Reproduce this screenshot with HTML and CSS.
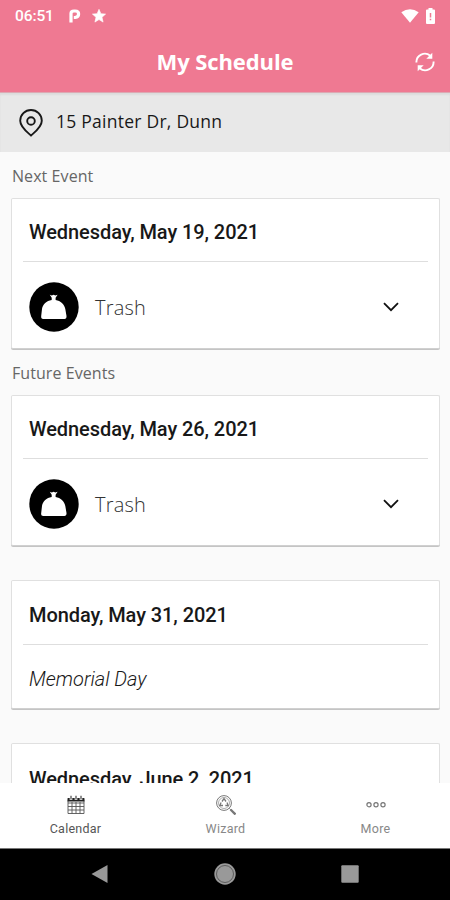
FILE: index.html
```html
<!DOCTYPE html>
<html lang="en">
<head>
<meta charset="utf-8">
<title>My Schedule</title>
<link rel="stylesheet" href="styles.css">
</head>
<body>
<svg class="defs" width="0" height="0">
  <symbol id="bag" viewBox="0 0 50 50">
    <circle cx="25" cy="25" r="24.700" fill="#000"/>
    <path d="M20.800 12.800l2 .8 1.800-.9 1.800.9 2.200-.8-2 3v2.300c5 .8 8.800 4.300 9.700 8.900l1.200 7c.2 1.800-.7 3-2 3H14.200c-1.500 0-2.300-1.200-2-3l.8-7c.8-4.600 4.500-8.100 9.700-8.900v-2.300z" fill="#fff"/>
  </symbol>
  <symbol id="chevron" viewBox="0 0 16 10">
    <path d="M1 1.200l7 7 7-7" fill="none" stroke="#111" stroke-width="1.800"/>
  </symbol>
</svg>
<div class="screen">
  <header class="top">
    <div class="status">
      <span class="clock">06:51</span>
      <svg class="pandora" width="12" height="14" viewBox="0 0 12 14"><path d="M2 13.500V4.500Q2 2 5 2H6.200Q9.600 2 9.600 5T6.200 8.500H4.800" fill="none" stroke="#fff" stroke-width="3.200"/></svg>
      <svg class="star" width="14" height="14" viewBox="0 0 14 14"><path d="M7 .3l1.900 4.400 4.700.4L10 8.300l1.100 4.800L7 10.600l-4.100 2.500L4 8.300.400 5.100l4.700-.4z" fill="#fff" stroke="#fff" stroke-width=".6"/></svg>
      <span class="grow"></span>
      <svg class="wifi" width="18" height="14" viewBox="0 0 18 14"><path d="M.3 3.300Q9-3 17.700 3.300L9 13.700z" fill="#fff"/></svg>
      <svg class="battery" width="9" height="16" viewBox="0 0 9 16"><path d="M0 2.500Q0 1.500 1 1.500H2.500V0h4v1.500H8q1 0 1 1V15q0 1-1 1H1q-1 0-1-1z" fill="#fff"/><path d="M4.500 5v4.600M4.500 10.700v1.600" stroke="#ef7992" stroke-width="1.500"/></svg>
    </div>
    <div class="titlebar">
      <h1>My Schedule</h1>
      <svg class="refresh" width="20" height="20" viewBox="0 0 20 20"><g fill="none" stroke="#fff" stroke-width="1.900"><path d="M1.400 10.500A8.400 8.400 0 0 1 15.300 3.800"/><path d="M18.600 9.500A8.400 8.400 0 0 1 4.700 16.200"/></g><path d="M17.300.7V6.700H11.300zM2.700 19.300V13.300H8.700z" fill="#fff"/></svg>
    </div>
  </header>
  <div class="location">
    <svg width="24" height="28" viewBox="0 0 24 28"><path d="M12 26.500C8.500 23.300 1.200 18.300 1.200 11.800a10.800 10.800 0 0 1 21.600 0C22.800 18.300 15.500 23.300 12 26.500z" fill="none" stroke="#181818" stroke-width="1.900"/><circle cx="12" cy="12" r="3.800" fill="none" stroke="#181818" stroke-width="1.900"/></svg>
    <span class="address">15 Painter Dr, Dunn</span>
  </div>
  <main class="list">
    <h2>Next Event</h2>
    <section class="card">
      <h3>Wednesday, May 19, 2021</h3>
      <div class="event"><svg width="50" height="50"><use href="#bag"/></svg><span class="kind">Trash</span><svg class="chev" width="16" height="10"><use href="#chevron"/></svg></div>
    </section>
    <h2>Future Events</h2>
    <section class="card">
      <h3>Wednesday, May 26, 2021</h3>
      <div class="event"><svg width="50" height="50"><use href="#bag"/></svg><span class="kind">Trash</span><svg class="chev" width="16" height="10"><use href="#chevron"/></svg></div>
    </section>
    <section class="card spaced">
      <h3>Monday, May 31, 2021</h3>
      <p class="holiday">Memorial Day</p>
    </section>
    <section class="card spaced">
      <h3 class="low">Wednesday, June 2, 2021</h3>
      <div class="event"></div>
    </section>
  </main>
  <nav class="tabs">
    <div class="tab active">
      <svg width="18" height="20" viewBox="0 0 18 20"><path d="M1 4.500h16v14H1zM1 8h16M1 11.500h16M1 15h16M5 7v11.500M9 7v11.500M13 7v11.500" fill="none" stroke="#555" stroke-width=".9"/><path d="M.6 3h16.800v3.500H.6z" fill="#222"/><path d="M4 1v4M9 1v4M14 1v4" stroke="#fff" stroke-width="2.600"/><path d="M4 .8v3.700M9 .8v3.700M14 .8v3.700" stroke="#444" stroke-width="1.200"/></svg>
      <span>Calendar</span>
    </div>
    <div class="tab">
      <svg width="20" height="20" viewBox="0 0 20 20"><g fill="none" stroke="#777"><circle cx="8" cy="8" r="7.400" stroke-width="1"/><circle cx="8" cy="8" r="5.500" stroke-width=".6"/><path d="M6 6.500l2-2.800 2 2.800M11 7.500l1.200 3H9.300M7 10.500H3.800l1.300-3" stroke-width="1.300"/><path d="M13.300 13.300l1.500 1.500" stroke-width="1"/><path d="M14.500 14.500l5 5" stroke-width="2.300"/></g></svg>
      <span>Wizard</span>
    </div>
    <div class="tab">
      <svg width="20" height="20" viewBox="0 0 20 20"><g fill="none" stroke="#777" stroke-width="1.200"><circle cx="3" cy="9.700" r="2.100"/><circle cx="10" cy="9.700" r="2.100"/><circle cx="17" cy="9.700" r="2.100"/></g></svg>
      <span>More</span>
    </div>
  </nav>
  <footer class="system">
    <svg width="18" height="22" viewBox="0 0 18 22"><path d="M.5 11L16.500 2v18z" fill="#999"/></svg>
    <svg width="22" height="22" viewBox="0 0 22 22"><circle cx="11" cy="11" r="10.700" fill="#999"/><circle cx="11" cy="11" r="8.500" fill="none" stroke="#555" stroke-width=".9"/></svg>
    <svg width="18" height="22" viewBox="0 0 18 22"><rect x=".3" y="2.300" width="17.400" height="17.400" rx="1" fill="#999"/></svg>
  </footer>
</div>
</body>
</html>
```
FILE: styles.css
```css
* { box-sizing: border-box; }
body { margin: 0; font-family: "Open Sans", sans-serif; }
svg { display: block; flex: none; }
.defs { position: absolute; }
h1, h2, h3, p { margin: 0; }
.screen { width: 450px; height: 900px; display: flex; flex-direction: column; overflow: hidden; background: #fafafa; }
.top { height: 92px; flex: none; background: #ef7992; color: #fff; }
.status { height: 32px; display: flex; align-items: center; padding: 0 15px; }
.clock { font: 500 15.5px/32px Roboto, sans-serif; width: 54px; letter-spacing: -.1px; }
.pandora { margin-right: 11px; }
.grow { flex: 1; }
.wifi { margin-right: 7px; }
.titlebar { height: 60px; display: grid; grid-template-columns: 1fr auto 1fr; align-items: center; padding: 0 15px; }
.titlebar h1 { grid-column: 2; font-size: 22px; font-weight: 700; line-height: 58px; padding-bottom: 2px; letter-spacing: -.1px; white-space: nowrap; }
.refresh { justify-self: end; }
.location { height: 60px; flex: none; display: flex; align-items: center; padding-left: 19px; gap: 13px; background: #e8e8e8; border-top: 1px solid #dca9b3; box-shadow: inset 0 2px 2px #dcdcdc; }
.address { font-size: 17.5px; line-height: 24px; color: #181818; letter-spacing: .25px; padding-bottom: 3px; }
.list { flex: 1; min-height: 0; overflow: hidden; padding: 0 11px; }
h2 { height: 46px; padding-left: 1px; font-size: 16px; font-weight: 400; line-height: 48px; letter-spacing: .07px; color: #666; }
.card { width: 429px; height: 151px; padding: 0 11px; background: #fff; border: 1px solid #e0e0e0; border-bottom-color: #d0d0d0; border-radius: 2px; box-shadow: 0 1px 0 #c4c4c4; }
.card.spaced { margin-top: 34px; height: 129px; }
.card.spaced + .card.spaced { margin-top: 34px; }
h3 { height: 63px; padding: 0 6px; border-bottom: 1px solid #dedede; font: 500 20px/67px Roboto, sans-serif; letter-spacing: -.08px; color: #181818; white-space: nowrap; }
.spaced h3 { height: 64px; line-height: 69px; }
.spaced h3.low { line-height: 71px; }
.event { height: 89px; display: flex; align-items: center; padding-left: 6px; }
.kind { font-size: 20px; font-weight: 300; letter-spacing: .2px; color: #333; margin-left: 16px; padding-top: 1px; flex: 1; }
.chev { margin-right: 29px; }
.holiday { padding-left: 6px; font: italic 300 20px/69px Roboto, sans-serif; color: #181818; }
.tabs { height: 65px; flex: none; display: grid; grid-template-columns: repeat(3, 1fr); background: #fff; }
.tab { display: flex; flex-direction: column; align-items: center; padding-top: 12px; padding-left: 1px; gap: 4px; font: 400 12.5px/20px Roboto, sans-serif; color: #888; letter-spacing: .25px; }
.active { color: #555; }
.system { height: 52px; flex: none; display: flex; justify-content: space-between; align-items: center; padding: 0 91px 2px; background: #000; border-top: 1px solid #777; }
```
